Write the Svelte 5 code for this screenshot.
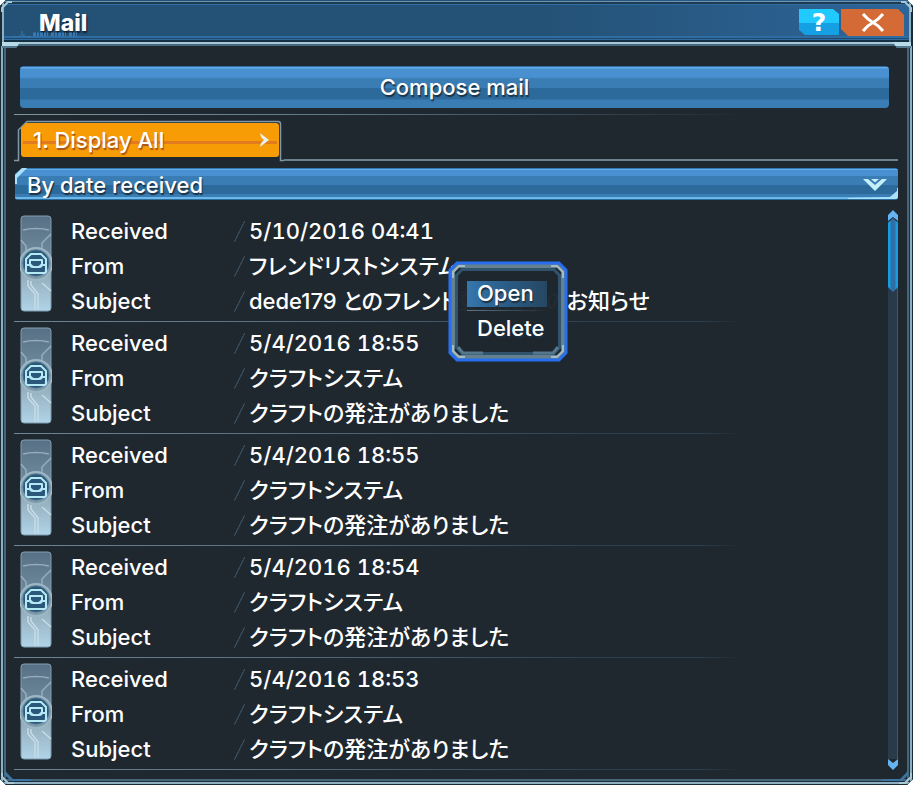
<script>
  const craft = { from: 'クラフトシステム', lead: '', subject: 'クラフトの発注がありました' };
  const mails = [
    {
      received: '5/10/2016 04:41',
      from: 'フレンドリストシステム',
      lead: 'dede179 ',
      subject: 'とのフレンド登録完了のお知らせ'
    },
    { received: '5/4/2016 18:55', ...craft },
    { received: '5/4/2016 18:55', ...craft },
    { received: '5/4/2016 18:54', ...craft },
    { received: '5/4/2016 18:53', ...craft }
  ];
  let sort = $state('date');
</script>

<main class="window">
  <header>
    <h1>Mail</h1>
    <svg class="signal" width="68" height="8" viewBox="0 0 68 8" aria-hidden="true">
      <path d="M0 6.500h1M2 6.500h2M5 6.500h1M8 7V5M10 7V1M12 7V4M14 6.500h1M16 6.500h2" />
      <path d="M21 4.500h44" stroke-width="4" stroke-dasharray="3 1 2 1 3 1 2 1 1 3" />
    </svg>
    <button class="help" aria-label="Help">?</button>
    <button class="close" aria-label="Close">
      <svg width="24" height="20" viewBox="0 0 24 20"><path d="M2 1Q7 7 12 9.500T22 18M22 1Q17 7 12 9.500T2 18" /></svg>
    </button>
  </header>

  <div class="body">
    <button class="compose">Compose mail</button>
    <div class="rule"></div>

    <nav class="tabs">
      <div class="tab">
        <svg class="outline" width="270" height="42" viewBox="0 0 270 42" aria-hidden="true">
          <path d="M0 40.500H4.500V10L13 1.500H264Q266.500 1.500 266.500 4V40.500H270" />
        </svg>
        <button>
          <span>1. Display All</span>
          <svg width="10" height="14" viewBox="0 0 10 14"><path d="M1 0 10 7 1 14 2 10 5 7 2 4Z" /></svg>
        </button>
      </div>
      <div class="tabline"></div>
    </nav>

    <div class="sort">
      <select aria-label="Sort order" bind:value={sort}>
        <option value="date">By date received</option>
      </select>
      <svg class="edge left" width="12" height="16" viewBox="0 0 12 16"><path d="M0 16V7L7 0h5L2 10v6Z" /></svg>
      <svg class="edge right" width="50" height="12" viewBox="0 0 50 12"><path d="M50 0v9l-2 2H0v-1l42-1 7-6V0Z" /></svg>
      <svg class="arrow" width="24" height="12" viewBox="0 0 24 12">
        <path d="M0 0h5l7 6 7-6h5L12 12Z" /><path d="M8 0h8l-4 3.500Z" />
      </svg>
    </div>

    <div class="list">
      <ul>
        {#each mails as mail}
          <li>
            <svg class="badge" width="32" height="97" viewBox="0 0 32 97" aria-hidden="true">
              <defs>
                <linearGradient id="plate" x1="0" y1="0" x2="0" y2="1">
                  <stop offset="0" stop-color="#577085" />
                  <stop offset=".35" stop-color="#6b8598" />
                  <stop offset=".65" stop-color="#96b0c0" />
                  <stop offset="1" stop-color="#b0d4e8" />
                </linearGradient>
              </defs>
              <rect x="1" y="1" width="30" height="95" rx="3" fill="url(#plate)" stroke="#819eb1" />
              <path class="trace" d="M3 15Q16 12 29 15M1 25l5 6v6M31 19l-9 9v5l-3 4" />
              <path class="trace low" d="M8 65v6l7 8v16M11 66v4l7 9v16M22 68l9 8" />
              <circle cx="16" cy="49" r="16" class="ring" />
              <circle cx="16" cy="48" r="13" class="hub" />
              <path class="mail" d="M6 50v-6l5-5h10l5 5v6M6 50v6q0 2 2 2h16q2 0 2-2v-6M6 50h5q1 2 3 2h4q2 0 3-2h5M10 45h12v4q0 3-3 3h-6q-3 0-3-3z" />
            </svg>
            <dl>
              <div><dt>Received</dt><dd class="date">{mail.received}</dd></div>
              <div><dt>From</dt><dd><span class="ja">{mail.from}</span></dd></div>
              <div><dt>Subject</dt><dd>{mail.lead}<span class="ja">{mail.subject}</span></dd></div>
            </dl>
          </li>
        {/each}
      </ul>
      <div class="scroll">
        <svg width="10" height="11" viewBox="0 0 10 11"><path d="M5 0l5 5v6L5 7 0 11V5Z" /></svg>
        <div class="track"><div class="thumb"></div></div>
        <svg width="10" height="11" viewBox="0 0 10 11"><path d="M5 11l5-5V0L5 4 0 0v6Z" /></svg>
      </div>

      <div class="menu">
        <svg width="120" height="101" viewBox="0 0 120 101" aria-hidden="true">
          <path class="fill" d="M9 2h102l7 7v83l-7 7H9l-7-7V9Z" />
          <path class="metal" d="M10 5h100l5 5v81l-5 5H10l-5-5V10Z" />
          <path class="blue" d="M9 2h102l7 7v83l-7 7H9l-7-7V9Z" />
          <path class="inner" d="M14 8.500h92l5.500 6v72l-5.500 6H14l-5.500-6v-72Z" />
          <path class="shine" d="M5 17v-6l6-6h6M103 5h6l6 6v6M5 84v6l6 6h6M103 96h6l6-6v-6" />
          <path class="foot" d="M10 86l5 6h20M110 86l-5 6H85" />
        </svg>
        <button class="open">Open</button>
        <button>Delete</button>
      </div>
    </div>
  </div>

  <svg class="corner tl" width="12" height="12" viewBox="0 0 12 12"><path d="M2 12V8L8 2h4" /></svg>
  <svg class="corner tr" width="12" height="12" viewBox="0 0 12 12"><path d="M0 2h4l6 6v4" /></svg>
  <svg class="corner bl" width="36" height="16" viewBox="0 0 36 16"><path d="M2 4v4l6 6h6" /><path class="accent" d="M5 1v5l6 6h22l-3-2H13L7 4Z" /></svg>
  <svg class="corner br" width="36" height="16" viewBox="0 0 36 16"><path d="M34 4v4l-6 6h-6" /><path class="accent" d="M31 1v5l-6 6H3l3-2h17l6-6Z" /></svg>
</main>

<style>
  :global(body) {
    background: #fff;
  }

  .window {
    position: relative;
    font: 500 22px/35px Inter, 'Noto Sans CJK JP', sans-serif;
    color: #fff;
    background: #20282f;
    clip-path: polygon(6px 0, calc(100% - 6px) 0, 100% 6px, 100% calc(100% - 6px), calc(100% - 6px) 100%, 6px 100%, 0 calc(100% - 6px), 0 6px);
    box-shadow: inset 0 0 0 1px #1b2c39, inset 0 0 0 3px #8eafc0, inset 0 0 0 4px #1e3040, inset 0 0 0 6px #456579;
  }

  button,
  select {
    margin: 0;
    border: 0;
    padding: 0;
    color: inherit;
    font: inherit;
    text-shadow: 1px 2px 1px #1b3244;
    cursor: pointer;
  }

  header {
    position: relative;
    display: flex;
    align-items: flex-start;
    gap: 2px;
    height: 46px;
    box-sizing: border-box;
    padding: 9px 9px 0 39px;
    background: linear-gradient(#6d93ad 0 1px, #1e3b54 1px 3px, #2f6ea5 3px 4px, transparent 4px 35px, #2e6ca2 35px 37px, #1f4a6e 37px 38px, #2e6ca2 38px 39px, #143044 39px 41px, #a9c8d5 41px 43px, #46697f 43px 45px, #20282f 45px) 0 1px / 100% 45px no-repeat,
      linear-gradient(90deg, #245277 60%, #2e6598);
    box-shadow: inset 2px 0 #1b2c39, inset 4px 0 #8eafc0, inset -2px 0 #1b2c39, inset -4px 0 #8eafc0;
  }

  header::before,
  header::after {
    content: '';
    position: absolute;
    top: 42px;
    left: 2px;
    width: 18px;
    height: 6px;
    background: linear-gradient(#b9dbe8 4px, #55798f 4px);
    clip-path: polygon(0 0, 100% 0, 80% 100%, 0 100%);
  }

  header::after {
    left: auto;
    right: 2px;
    clip-path: polygon(0 0, 100% 0, 100% 100%, 20% 100%);
  }

  h1 {
    flex: 1;
    margin: 0;
    font: 800 23px/28px Inter, sans-serif;
    text-shadow: 1px 2px 2px #10202e;
  }

  .signal {
    position: absolute;
    left: 12px;
    top: 30px;
    fill: none;
    stroke: #3779b3;
  }

  .help {
    width: 40px;
    height: 26px;
    font: bold 25px/28px 'DejaVu Sans', sans-serif;
    text-shadow: none;
    background: linear-gradient(#20caff 14px, #14a0e2 14px);
    clip-path: polygon(0 0, 34px 0, 100% 5px, 100% 100%, 6px 100%, 0 21px);
  }

  .close {
    display: grid;
    place-items: center;
    width: 63px;
    height: 27px;
    background: #d46b36;
    clip-path: polygon(0 0, 57px 0, 100% 6px, 100% 100%, 7px 100%, 0 20px);
  }

  .close path {
    fill: none;
    stroke: #fff;
    stroke-width: 3;
  }

  .body {
    padding: 20px 15px 15px 14px;
  }

  .compose {
    display: block;
    width: calc(100% - 15px);
    height: 42px;
    margin-left: 6px;
    border-radius: 4px;
    background: linear-gradient(#2f6ca0 1px, #62acec 1px 2px, #4890d0 3px 11px, #3a7cb4 13px 22px, #2d6a9c 22px 33px, #3a7cb4 34px);
  }

  .rule {
    height: 1px;
    margin: 6px 0 5px;
    background: linear-gradient(90deg, #8194a1, #607888 35%, #2c3d4b 70%, transparent 83%);
  }

  .tabs {
    display: flex;
    height: 42px;
  }

  .tab {
    position: relative;
    width: 270px;
    padding: 3px 5px 5px 7px;
    box-sizing: border-box;
  }

  .outline {
    position: absolute;
    inset: 0;
    fill: none;
    stroke: #8199a7;
    stroke-width: 1.500;
    pointer-events: none;
  }

  .tab button {
    display: flex;
    justify-content: space-between;
    align-items: center;
    width: 258px;
    height: 34px;
    padding: 0 10px 0 12px;
    border-radius: 3px;
    background: linear-gradient(90deg, transparent 2px, #e17b1d 2px 256px, transparent 256px) 0 18px / 100% 3px no-repeat, #f89c05;
    clip-path: polygon(5px 0, 100% 0, 100% 100%, 0 100%, 0 5px);
    text-shadow: 1px 2px 1px #a5541b;
  }

  .tab button svg {
    fill: #e9f0ee;
  }

  .tabline {
    flex: 1;
    height: 39px;
    border-bottom: 2px solid #6b808d;
  }

  .sort {
    position: relative;
    margin-top: 6px;
    padding-left: 1px;
    height: 32px;
  }

  select {
    display: block;
    appearance: none;
    width: 100%;
    height: 32px;
    padding: 0 40px 2px 12px;
    border-radius: 3px;
    outline-offset: -2px;
    background: linear-gradient(#3277ae 1px, #62acec 1px 2px, #4890d0 2px 8px, #3a7cb4 8px 17px, #2d6a9c 17px 26px, #3a7cb4 26px 29px, #6bb9ea 29px 31px, #2d6a9c 31px);
    clip-path: polygon(7px 0, 100% 0, 100% 100%, 0 100%, 0 6px);
  }

  .edge,
  .arrow {
    position: absolute;
    fill: #a9e2f8;
    pointer-events: none;
  }

  .left {
    left: 1px;
    top: 0;
  }

  .right {
    right: 0;
    bottom: 0;
  }

  .arrow {
    right: 11px;
    top: 11px;
    fill: #c3f0fa;
  }

  .list {
    position: relative;
    display: flex;
    margin-top: 10px;
  }

  ul {
    flex: 1;
    margin: 0;
    padding: 0;
    list-style: none;
  }

  li {
    display: flex;
    gap: 19px;
    padding: 4px 0 3px 6px;
    background: linear-gradient(90deg, #6f8794, #567080 30%, #2d4150 65%, #2d4150 78%, transparent 83%) 0 100% / 100% 1px no-repeat;
  }

  .badge {
    margin-top: 1px;
  }

  .trace {
    fill: none;
    stroke: #94aebe;
    stroke-width: 1.500;
  }

  .low {
    stroke: #c9dce5;
  }

  .ring {
    fill: #7c98aa;
    stroke: #9cb8c6;
    stroke-width: 2;
  }

  .hub {
    fill: #2b587a;
    stroke: #48718b;
  }

  .mail {
    fill: none;
    stroke: #b5e9f6;
    stroke-width: 2;
    stroke-linejoin: round;
  }

  dl {
    flex: 1;
    margin: 0;
  }

  dl div {
    display: flex;
    height: 35px;
  }

  dt {
    width: 178px;
    background: linear-gradient(116deg, transparent 49%, #34495a 49% 55%, transparent 55%) 162px 7px / 12px 21px no-repeat;
  }

  dd {
    margin: 0;
    white-space: nowrap;
  }

  .date {
    font-variant-numeric: tabular-nums;
  }

  .ja {
    display: inline-block;
    font: 500 22px/31px 'Noto Sans CJK JP', sans-serif;
    font-feature-settings: 'palt';
    vertical-align: top;
  }

  .scroll {
    display: flex;
    flex-direction: column;
    width: 10px;
  }

  .scroll svg {
    display: block;
    fill: #65b3f0;
  }

  .track {
    flex: 1;
    box-sizing: border-box;
    background: #293b4b;
    border-right: 1px solid #475661;
  }

  .thumb {
    box-sizing: border-box;
    width: 10px;
    height: 74px;
    margin-top: -3px;
    background: linear-gradient(90deg, #159de2 2px, #2f6fa5 3px 7px, #159de2 8px);
    clip-path: polygon(50% 0, 100% 5px, 100% 69px, 50% 100%, 0 69px, 0 5px);
  }

  .menu {
    position: absolute;
    left: 434px;
    top: 51px;
    display: flex;
    flex-direction: column;
    align-items: flex-start;
    width: 120px;
    height: 101px;
    box-sizing: border-box;
    padding: 19px 12px 0 19px;
  }

  .menu svg {
    position: absolute;
    inset: 0;
    fill: none;
  }

  .menu .fill {
    fill: #1f272efa;
  }

  .metal {
    stroke: #65818e;
    stroke-width: 4;
  }

  .blue {
    stroke: #276ff0;
    stroke-width: 3;
  }

  .inner {
    stroke: #31536d;
    stroke-width: 3;
  }

  .shine {
    stroke: #a5bbc4;
    stroke-width: 2;
  }

  .foot {
    stroke: #54788e;
    stroke-width: 3;
  }

  .menu button {
    position: relative;
    width: 82px;
    height: 35px;
    padding: 0 0 8px 10px;
    line-height: 27px;
    text-align: left;
    background: none;
  }

  .menu .open {
    background: linear-gradient(90deg, #3577ad, #2a5c85 50%, #264762) 0 1px / 80px 26px no-repeat,
      linear-gradient(90deg, #607785, transparent) 0 30px / 100% 1px no-repeat;
  }

  .corner {
    position: absolute;
    fill: none;
    stroke: #a9c9d6;
    stroke-width: 2;
    pointer-events: none;
  }

  .accent {
    fill: #3b74a0;
    stroke: none;
  }

  .tl {
    left: 0;
    top: 0;
  }

  .tr {
    right: 0;
    top: 0;
  }

  .bl {
    left: 0;
    bottom: 0;
  }

  .br {
    right: 0;
    bottom: 0;
  }
</style>
